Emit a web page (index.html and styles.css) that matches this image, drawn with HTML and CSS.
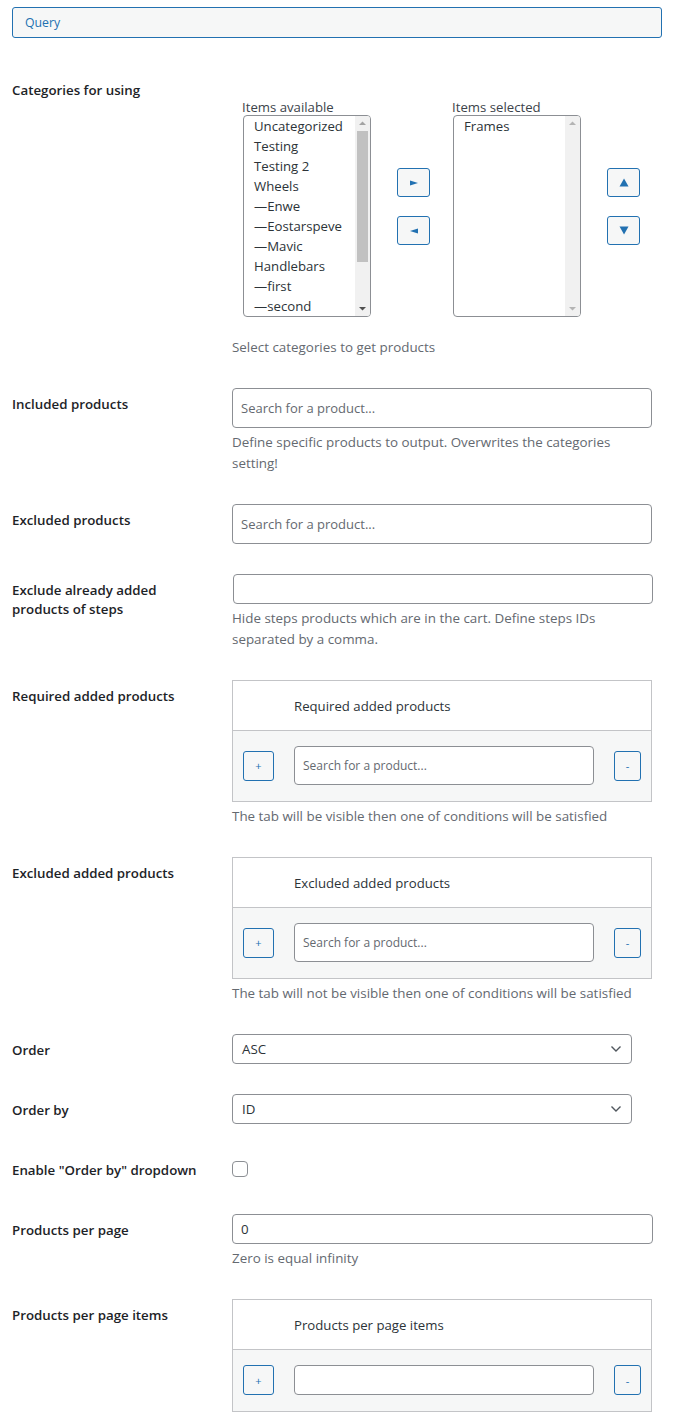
FILE: index.html
```html
<!DOCTYPE html>
<html>
<head>
<meta charset="utf-8">
<link rel="stylesheet" href="styles.css">
</head>
<body>
<div class="page">
  <button class="query">Query</button>
  <div class="form">

    <div class="row">
      <div class="th">Categories for using</div>
      <div class="td">
        <div class="dual">
          <div class="col">
            <div class="col-label">Items available</div>
            <div class="listbox">
              <ul class="opts">
                <li>Uncategorized</li>
                <li>Testing</li>
                <li>Testing 2</li>
                <li>Wheels</li>
                <li>—Enwe</li>
                <li>—Eostarspeve</li>
                <li>—Mavic</li>
                <li>Handlebars</li>
                <li>—first</li>
                <li>—second</li>
              </ul>
              <div class="sbar">
                <svg class="arr" width="15" height="15" viewBox="0 0 15 15"><polygon points="4,9 11,9 7.5,5.5" fill="#a3a3a3"/></svg>
                <div class="thumb"></div>
                <div class="track-fill"></div>
                <svg class="arr" width="15" height="15" viewBox="0 0 15 15"><polygon points="4,6 11,6 7.5,9.5" fill="#505050"/></svg>
              </div>
            </div>
          </div>
          <div class="moves">
            <button class="mv"><svg width="10" height="6" viewBox="0 0 10 6"><polygon points="1,0.5 9,3 1,5.5" fill="#2271b1"/></svg></button>
            <button class="mv"><svg width="10" height="6" viewBox="0 0 10 6"><polygon points="9,0.5 1,3 9,5.5" fill="#2271b1"/></svg></button>
          </div>
          <div class="col col-second">
            <div class="col-label">Items selected</div>
            <div class="listbox">
              <ul class="opts">
                <li>Frames</li>
              </ul>
              <div class="sbar">
                <svg class="arr" width="15" height="15" viewBox="0 0 15 15"><polygon points="4,9 11,9 7.5,5.5" fill="#b4b4b4"/></svg>
                <div class="track-fill"></div>
                <svg class="arr" width="15" height="15" viewBox="0 0 15 15"><polygon points="4,6 11,6 7.5,9.5" fill="#b4b4b4"/></svg>
              </div>
            </div>
          </div>
          <div class="moves">
            <button class="mv"><svg width="10" height="9" viewBox="0 0 10 9"><polygon points="0.5,8.5 9.5,8.5 5,0.5" fill="#2271b1"/></svg></button>
            <button class="mv"><svg width="10" height="9" viewBox="0 0 10 9"><polygon points="0.5,0.5 9.5,0.5 5,8.5" fill="#2271b1"/></svg></button>
          </div>
        </div>
        <p class="desc desc-cats">Select categories to get products</p>
      </div>
    </div>

    <div class="row">
      <div class="th">Included products</div>
      <div class="td">
        <input class="search" type="text" placeholder="Search for a product...">
        <p class="desc">Define specific products to output. Overwrites the categories setting!</p>
      </div>
    </div>

    <div class="row">
      <div class="th">Excluded products</div>
      <div class="td">
        <input class="search" type="text" placeholder="Search for a product...">
      </div>
    </div>

    <div class="row">
      <div class="th th-two">Exclude already added products of steps</div>
      <div class="td">
        <input class="txt txt-shift" type="text">
        <p class="desc">Hide steps products which are in the cart. Define steps IDs separated by a comma.</p>
      </div>
    </div>

    <div class="row">
      <div class="th">Required added products</div>
      <div class="td">
        <div class="rep">
          <div class="rep-head">Required added products</div>
          <div class="rep-body">
            <div class="cell"><button class="pm plus">+</button></div>
            <div class="cell"><input class="rep-search" type="text" placeholder="Search for a product..."></div>
            <div class="cell"><button class="pm minus">-</button></div>
          </div>
        </div>
        <p class="desc">The tab will be visible then one of conditions will be satisfied</p>
      </div>
    </div>

    <div class="row">
      <div class="th">Excluded added products</div>
      <div class="td">
        <div class="rep">
          <div class="rep-head">Excluded added products</div>
          <div class="rep-body">
            <div class="cell"><button class="pm plus">+</button></div>
            <div class="cell"><input class="rep-search" type="text" placeholder="Search for a product..."></div>
            <div class="cell"><button class="pm minus">-</button></div>
          </div>
        </div>
        <p class="desc">The tab will not be visible then one of conditions will be satisfied</p>
      </div>
    </div>

    <div class="row">
      <div class="th">Order</div>
      <div class="td">
        <div class="sel"><span>ASC</span><svg width="12" height="8" viewBox="0 0 12 8"><polyline points="1.5,1.5 6,6 10.5,1.5" fill="none" stroke="#50575e" stroke-width="1.4"/></svg></div>
      </div>
    </div>

    <div class="row">
      <div class="th">Order by</div>
      <div class="td">
        <div class="sel"><span>ID</span><svg width="12" height="8" viewBox="0 0 12 8"><polyline points="1.5,1.5 6,6 10.5,1.5" fill="none" stroke="#50575e" stroke-width="1.4"/></svg></div>
      </div>
    </div>

    <div class="row">
      <div class="th">Enable "Order by" dropdown</div>
      <div class="td">
        <div class="check"></div>
      </div>
    </div>

    <div class="row">
      <div class="th">Products per page</div>
      <div class="td">
        <input class="txt txt-wide" type="text" value="0">
        <p class="desc">Zero is equal infinity</p>
      </div>
    </div>

    <div class="row">
      <div class="th">Products per page items</div>
      <div class="td">
        <div class="rep">
          <div class="rep-head">Products per page items</div>
          <div class="rep-body">
            <div class="cell"><button class="pm plus">+</button></div>
            <div class="cell"><input class="rep-txt" type="text"></div>
            <div class="cell"><button class="pm minus">-</button></div>
          </div>
        </div>
      </div>
    </div>

  </div>
</div>
</body>
</html>
```

FILE: styles.css
```css
* { box-sizing: border-box; }

body {
  margin: 0;
  background: #fff;
  font-family: "Open Sans", "Liberation Sans", sans-serif;
  font-size: 13px;
  color: #1d2327;
}

.page {
  width: 674px;
  padding: 7px 12px 0 12px;
}

.query {
  display: block;
  width: 650px;
  height: 31px;
  margin: 0;
  padding: 0 12px;
  border: 1px solid #2271b1;
  border-radius: 3px;
  background: #f6f7f7;
  color: #2271b1;
  font-family: "Open Sans", "Liberation Sans", sans-serif;
  font-size: 12.3px;
  text-align: left;
}

.form { margin-top: 23px; }

.row {
  display: grid;
  grid-template-columns: 220px 420px;
}

.th {
  padding: 20px 20px 0 0;
  font-weight: 600;
  font-size: 13.3px;
  line-height: 18px;
}
.th-two { line-height: 19px; }

.td { padding: 13px 0 17px; }

.desc {
  margin: 4px 0 0;
  font-size: 13.4px;
  line-height: 21px;
  color: #646970;
}
.desc-cats { margin-top: 20px; }

/* dual list */
.dual {
  display: flex;
  align-items: flex-start;
  margin: 25px 0 0 10px;
}
.col-label {
  font-size: 13.2px;
  line-height: 16px;
  color: #3c434a;
}
.col-second { margin-left: 22px; }

.listbox {
  display: flex;
  width: 128px;
  height: 202px;
  margin-left: 1px;
  border: 1px solid #8c8f94;
  border-radius: 4px;
  overflow: hidden;
  background: #fff;
}
.opts {
  flex: 1;
  margin: 0;
  padding: 0 0 0 10px;
  list-style: none;
  font-size: 13.2px;
  line-height: 20px;
  color: #2c3338;
  white-space: nowrap;
  overflow: hidden;
}
.sbar {
  width: 15px;
  display: flex;
  flex-direction: column;
  align-items: center;
  background: #f1f1f1;
}
.arr { flex: none; display: block; }
.thumb {
  width: 11px;
  height: 131px;
  background: #c1c1c1;
  flex: none;
}
.track-fill { flex: 1; }

.moves {
  display: flex;
  flex-direction: column;
  gap: 19px;
  margin: 69px 0 0 26px;
}
.mv {
  display: flex;
  align-items: center;
  justify-content: center;
  width: 33px;
  height: 29px;
  padding: 0;
  border: 1px solid #2271b1;
  border-radius: 3px;
  background: #f6f7f7;
}
.mv svg { display: block; }

/* inputs */
.search {
  display: block;
  width: 420px;
  height: 40px;
  margin: 0;
  padding: 0 8px;
  border: 1px solid #8c8f94;
  border-radius: 4px;
  font-family: "Open Sans", "Liberation Sans", sans-serif;
  font-size: 13px;
  color: #2c3338;
}
.search::placeholder, .rep-search::placeholder { color: #646970; }

.txt {
  display: block;
  width: 420px;
  height: 30px;
  margin: 0;
  padding: 0 8px;
  border: 1px solid #8c8f94;
  border-radius: 4px;
  font-family: "Open Sans", "Liberation Sans", sans-serif;
  font-size: 13.3px;
  color: #2c3338;
}
.txt-shift { margin-left: 1px; }
.txt-wide { width: 421px; }

/* repeater table */
.rep {
  width: 420px;
  border: 1px solid #c3c4c7;
}
.rep-head {
  height: 50px;
  padding-left: 61px;
  border-bottom: 1px solid #c3c4c7;
  display: flex;
  align-items: center;
  font-size: 13.2px;
  color: #2c3338;
  background: #fff;
}
.rep-body {
  display: grid;
  grid-template-columns: 51px 1fr 47px;
  align-items: center;
  padding: 15px 0 16px;
  background: #f6f7f7;
}
.cell { padding: 0 10px; }
.pm {
  display: block;
  height: 30px;
  padding: 0;
  border: 1px solid #2271b1;
  border-radius: 3px;
  background: #f6f7f7;
  color: #2271b1;
  font-family: "Open Sans", "Liberation Sans", sans-serif;
  font-size: 11px;
}
.plus { width: 31px; }
.minus { width: 27px; }

.rep-search {
  display: block;
  width: 100%;
  height: 39px;
  margin: 0;
  padding: 0 8px;
  border: 1px solid #8c8f94;
  border-radius: 4px;
  background: #fff;
  font-family: "Open Sans", "Liberation Sans", sans-serif;
  font-size: 12px;
}
.rep-txt {
  display: block;
  width: 100%;
  height: 30px;
  margin: 0;
  border: 1px solid #8c8f94;
  border-radius: 4px;
  background: #fff;
}

/* select */
.sel {
  display: flex;
  align-items: center;
  justify-content: space-between;
  width: 400px;
  height: 30px;
  padding: 0 9px 0 9px;
  border: 1px solid #8c8f94;
  border-radius: 4px;
  font-size: 13.3px;
  color: #2c3338;
  background: #fff;
}
.sel svg { display: block; }

.check {
  width: 16px;
  height: 16px;
  margin: 7px 0;
  border: 1px solid #8c8f94;
  border-radius: 4px;
  background: #fff;
}
```
